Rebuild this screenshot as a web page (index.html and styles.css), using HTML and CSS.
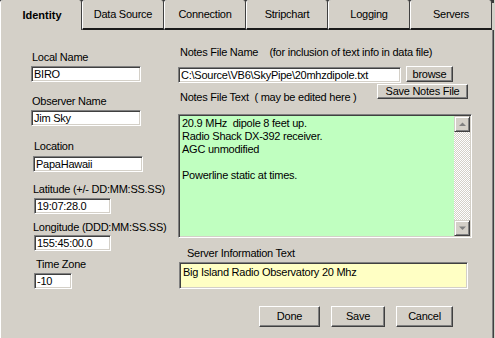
FILE: index.html
```html
<!DOCTYPE html>
<html>
<head>
<meta charset="utf-8">
<link rel="stylesheet" href="styles.css">
</head>
<body>
<div class="window">
  <div class="tabs">
    <div class="tab active">Identity</div>
    <div class="tab">Data Source</div>
    <div class="tab">Connection</div>
    <div class="tab">Stripchart</div>
    <div class="tab">Logging</div>
    <div class="tab">Servers</div>
  </div>
  <div class="panel">
    <div class="left">
      <div class="fld fld-local"><span class="lbl">Local Name</span><div class="tb tb-name">BIRO</div></div>
      <div class="fld fld-observer"><span class="lbl">Observer Name</span><div class="tb tb-name">Jim Sky</div></div>
      <div class="fld fld-location"><span class="lbl">Location</span><div class="tb tb-name">PapaHawaii</div></div>
      <div class="fld fld-lat"><span class="lbl">Latitude (+/- DD:MM:SS.SS)</span><div class="tb tb-coord">19:07:28.0</div></div>
      <div class="fld fld-lon"><span class="lbl">Longitude (DDD:MM:SS.SS)</span><div class="tb tb-coord">155:45:00.0</div></div>
      <div class="fld fld-tz"><span class="lbl">Time Zone</span><div class="tb tb-tz">-10</div></div>
    </div>
    <div class="right">
      <span class="lbl lbl-notes-name">Notes File Name&nbsp;&nbsp;&nbsp; (for inclusion of text info in data file)</span>
      <div class="file-row">
        <div class="tb tb-file">C:\Source\VB6\SkyPipe\20mhzdipole.txt</div>
        <div class="btn btn-browse">browse</div>
      </div>
      <div class="notes-row">
        <span class="lbl lbl-notes-text">Notes File Text&nbsp; ( may be edited here )</span>
        <div class="btn btn-savenotes">Save Notes File</div>
      </div>
      <div class="memo">
        <div class="memo-text">20.9 MHz&nbsp; dipole 8 feet up.<br>Radio Shack DX-392 receiver.<br>AGC unmodified<br><br>Powerline static at times.</div>
        <div class="vscroll">
          <div class="sbtn"><svg width="7" height="5" viewBox="0 0 7 5"><path d="M3.5 0.5 L7 4 L0 4 Z" fill="#808080"/></svg></div>
          <div class="strack"></div>
          <div class="sbtn"><svg width="7" height="5" viewBox="0 0 7 5"><path d="M0 0.5 L7 0.5 L3.5 4 Z" fill="#808080"/></svg></div>
        </div>
      </div>
      <span class="lbl lbl-server">Server Information Text</span>
      <div class="server-box">Big Island Radio Observatory 20 Mhz</div>
      <div class="actions">
        <div class="btn btn-done">Done</div>
        <div class="btn btn-save">Save</div>
        <div class="btn btn-cancel">Cancel</div>
      </div>
    </div>
  </div>
</div>
</body>
</html>
```
FILE: styles.css
```css
* { box-sizing: border-box; }

body {
  margin: 0;
  width: 495px;
  height: 338px;
  overflow: hidden;
  background: #d4d0c8;
  font: 11px/13px "Liberation Sans", Arial, sans-serif;
  letter-spacing: -0.25px;
  color: #000;
}

.window {
  width: 494px;
  height: 338px;
  display: flex;
  flex-direction: column;
}

/* tabs */
.tabs {
  display: flex;
  height: 30px;
  background: linear-gradient(#3a3a3a 0 3px, #d4d0c8 3px);
}

.tab {
  width: 82px;
  height: 30px;
  flex: none;
  background: #d4d0c8;
  border-left: 1px solid #fff;
  border-right: 1px solid #404040;
  border-bottom: 2px solid #1a1a1a;
  border-radius: 3px 3px 0 0;
  text-align: center;
  padding-top: 8px;
  white-space: nowrap;
}

.tab.active {
  font-weight: bold;
  letter-spacing: 0;
  border-bottom: none;
  padding-top: 9px;
  padding-left: 2px;
}

/* panel */
.panel {
  flex: 1;
  display: flex;
  border-left: 1px solid #fff;
  border-right: 1px solid #404040;
  box-shadow: inset -1px 0 #808080;
}

.lbl {
  display: block;
  height: 13px;
  white-space: nowrap;
}

.tb {
  height: 16px;
  background: #fff;
  border: 1px solid;
  border-color: #808080 #fff #fff #808080;
  box-shadow: inset 1px 1px #404040, inset -1px -1px #d4d0c8;
  padding: 1px 1px 0 2px;
  white-space: nowrap;
  overflow: hidden;
}

.btn {
  display: flex;
  align-items: center;
  justify-content: center;
  background: #d4d0c8;
  border: 1px solid;
  border-color: #fff #404040 #404040 #fff;
  box-shadow: inset -1px -1px #808080;
  white-space: nowrap;
}

/* left column */
.left {
  width: 177px;
  flex: none;
  padding: 21px 0 0 30px;
}

.fld {
  display: flex;
  flex-direction: column;
  align-items: flex-start;
  gap: 2px;
}

.fld .lbl { margin-left: 1px; }

.fld-observer { margin-top: 13px; }
.fld-location { margin-top: 14px; margin-left: 2px; gap: 3px; }
.fld-lat { margin-top: 11px; margin-left: 3px; }
.fld-lon { margin-top: 7px; margin-left: 3px; gap: 1px; }
.fld-tz { margin-top: 7px; margin-left: 3px; }
.fld-lat .lbl, .fld-lon .lbl { margin-left: -1px; }
.fld-tz .lbl { margin-left: 2px; }

.tb-name { width: 110px; }
.tb-coord { width: 77px; }
.tb-tz { width: 38px; }

/* right column */
.right {
  width: 294px;
  flex: none;
  padding-top: 16px;
  display: flex;
  flex-direction: column;
}

.lbl-notes-name { margin-left: 2px; }

.file-row {
  display: flex;
  align-items: flex-start;
  margin-top: 8px;
}

.tb-file { width: 223px; }

.btn-browse {
  width: 47px;
  height: 16px;
  margin-left: 5px;
  margin-top: -1px;
}

.notes-row {
  display: flex;
  align-items: flex-start;
  margin-top: 1px;
}

.lbl-notes-text { margin: 7px 0 0 2px; }

.btn-savenotes {
  width: 91px;
  height: 15px;
  margin-left: auto;
  margin-right: 4px;
}

.memo {
  margin-top: 10px;
  width: 294px;
  height: 124px;
  display: flex;
  background: #c0ffc0;
  border: 1px solid;
  border-color: #808080 #fff #fff #808080;
  box-shadow: inset 1px 1px #404040, inset -1px -1px #d4d0c8;
  padding: 1px;
}

.memo-text {
  flex: 1;
  padding: 1px 0 0 2px;
}

.vscroll {
  width: 16px;
  display: flex;
  flex-direction: column;
}

.sbtn {
  height: 16px;
  display: flex;
  align-items: center;
  justify-content: center;
  background: #d4d0c8;
  border: 1px solid;
  border-color: #d4d0c8 #404040 #404040 #d4d0c8;
  box-shadow: inset 1px 1px #fff, inset -1px -1px #808080;
}

.strack {
  flex: 1;
  background: repeating-conic-gradient(#d4d0c8 0 25%, #fff 0 50%) 0 0 / 2px 2px;
}

.lbl-server { margin: 9px 0 0 9px; }

.server-box {
  margin: 2px 0 0 1px;
  width: 289px;
  height: 27px;
  background: #ffffc4;
  border: 1px solid;
  border-color: #808080 #fff #fff #808080;
  box-shadow: inset 1px 1px #404040, inset -1px -1px #d4d0c8;
  padding: 3px 0 0 3px;
  white-space: nowrap;
}

.actions {
  display: flex;
  gap: 11px;
  margin-top: 17px;
  padding-left: 81px;
}

.actions .btn { height: 21px; }
.btn-done { width: 61px; }
.btn-save { width: 54px; }
.btn-cancel { width: 57px; }
```
